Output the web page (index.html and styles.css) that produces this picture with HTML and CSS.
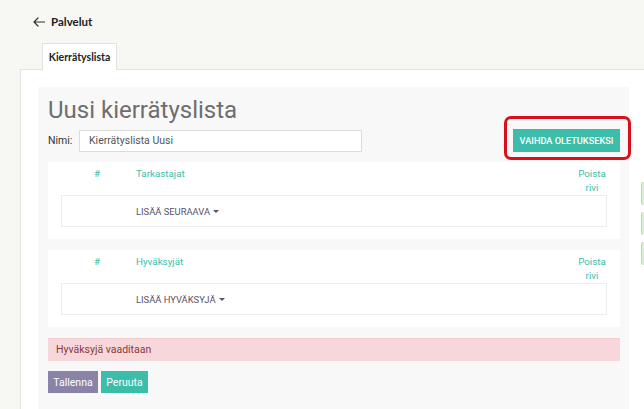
FILE: index.html
```html
<!DOCTYPE html>
<html lang="fi">
<head>
<meta charset="utf-8">
<title>Uusi kierrätyslista</title>
<link rel="stylesheet" href="styles.css">
</head>
<body>
<div class="topbar">
  <svg class="back" width="12" height="10" viewBox="0 0 12 10"><path d="M11.5 5H1M5 1 1 5l4 4" fill="none" stroke="#333" stroke-width="1.2" stroke-linecap="round" stroke-linejoin="round"/></svg>
  <span class="crumb">Palvelut</span>
</div>
<div class="tabs"><div class="tab">Kierrätyslista</div></div>
<div class="panel">
  <div class="content">
    <h1 class="title">Uusi kierrätyslista</h1>
    <div class="namerow">
      <label class="label">Nimi:</label>
      <div class="input">Kierrätyslista Uusi</div>
      <div class="btnwrap">
        <button class="btn teal defaultbtn">VAIHDA OLETUKSEKSI</button>
        <span class="highlight"></span>
      </div>
    </div>

    <div class="section">
      <div class="thead">
        <div class="c1">#</div>
        <div class="c2">Tarkastajat</div>
        <div class="c3">Poista rivi</div>
      </div>
      <div class="row"><span class="add">LISÄÄ SEURAAVA<span class="caret"></span></span></div>
    </div>

    <div class="section">
      <div class="thead">
        <div class="c1">#</div>
        <div class="c2">Hyväksyjät</div>
        <div class="c3">Poista rivi</div>
      </div>
      <div class="row"><span class="add">LISÄÄ HYVÄKSYJÄ<span class="caret"></span></span></div>
    </div>

    <div class="alert">Hyväksyjä vaaditaan</div>

    <div class="actions">
      <button class="btn purple">Tallenna</button>
      <button class="btn teal">Peruuta</button>
    </div>
  </div>
</div>
<div class="edge">
  <span class="edgebar"></span>
  <span class="edgebar"></span>
  <span class="edgebar"></span>
</div>
</body>
</html>
```
FILE: styles.css
```css
html, body {
  margin: 0;
  padding: 0;
}
body {
  background: #f7f7f3;
  font-family: Roboto, "Liberation Sans", sans-serif;
  height: 409px;
  overflow: hidden;
  position: relative;
}
.topbar {
  height: 43px;
  display: flex;
  align-items: center;
  padding-left: 33px;
  box-sizing: border-box;
}
.back {
  margin-right: 6px;
}
.crumb {
  font-family: Lato, "Open Sans", sans-serif;
  font-weight: 700;
  font-size: 11.5px;
  color: #222;
}
.tabs {
  padding-left: 42px;
  height: 26px;
  position: relative;
  z-index: 1;
}
.tab {
  display: inline-block;
  box-sizing: border-box;
  width: 75px;
  height: 27px;
  background: #fff;
  border: 1px solid #e2e2e0;
  border-bottom: none;
  font-family: Lato, "Open Sans", sans-serif;
  font-weight: 700;
  font-size: 10.5px;
  color: #222;
  text-align: center;
  line-height: 26px;
}
.panel {
  margin-left: 20px;
  background: #fff;
  border-top: 1px solid #e2e2e0;
  border-left: 1px solid #e2e2e0;
  padding: 17px 15px 0 17px;
  height: 340px;
  box-sizing: border-box;
  display: flex;
  flex-direction: column;
}
.content {
  flex: 1;
  min-height: 0;
  background: #f8f8f8;
  padding: 9px 9px 0 10px;
}
.title {
  margin: 0;
  font-size: 24px;
  line-height: 28px;
  font-weight: 400;
  color: #6e6e6e;
}
.namerow {
  display: flex;
  align-items: center;
  margin-top: 5px;
  height: 23px;
}
.label {
  font-size: 10.5px;
  color: #333;
  width: 31px;
}
.input {
  box-sizing: border-box;
  width: 283px;
  height: 22px;
  border: 1px solid #dcdcdc;
  background: #fff;
  font-size: 10.5px;
  color: #555;
  line-height: 20px;
  padding-left: 9px;
}
.btnwrap {
  margin-left: auto;
  position: relative;
}
.btn {
  border: none;
  font-family: Roboto, "Liberation Sans", sans-serif;
  font-size: 10.5px;
  color: #fff;
  height: 22px;
  padding: 0 5px;
  display: block;
}
.teal {
  background: #3bbda9;
}
.purple {
  background: #8b82a8;
}
.defaultbtn {
  width: 107px;
  height: 23px;
  padding: 0;
  font-size: 9.2px;
  font-weight: 500;
}
.highlight {
  position: absolute;
  left: -9px;
  top: -13px;
  right: -11px;
  bottom: -8px;
  border: 3px solid #d9101c;
  border-radius: 7px;
}
.section {
  background: #fff;
  margin-top: 10px;
  padding: 5px 13px 12px 13px;
}
.section + .section {
  margin-top: 11px;
}
.thead {
  display: grid;
  grid-template-columns: 72px 1fr 34px;
  font-size: 9.8px;
  line-height: 14px;
  color: #3bbda9;
}
.c1 {
  text-align: center;
}
.c2 {
  padding-left: 3px;
}
.c3 {
  text-align: center;
  transform: translateX(2px);
}
.row {
  box-sizing: border-box;
  height: 32px;
  border: 1px solid #ededed;
  display: flex;
  align-items: center;
  padding-left: 74px;
}
.add {
  font-size: 9.4px;
  color: #58526a;
  display: flex;
  align-items: center;
}
.caret {
  display: inline-block;
  margin-left: 3px;
  border-top: 3px solid #58526a;
  border-left: 3px solid transparent;
  border-right: 3px solid transparent;
}
.alert {
  margin-top: 11px;
  height: 23px;
  background: #f8d7da;
  border-top: 1px solid #f3cdd0;
  box-sizing: border-box;
  color: #87393f;
  font-size: 10.5px;
  line-height: 21px;
  padding-left: 8px;
}
.actions {
  display: flex;
  gap: 3px;
  margin-top: 10px;
}
.actions .purple {
  width: 50px;
}
.actions .teal {
  width: 47px;
}
.edge {
  position: absolute;
  left: 641px;
  top: 182px;
  display: flex;
  flex-direction: column;
  gap: 7px;
}
.edgebar {
  display: block;
  width: 6px;
  height: 23px;
  background: #d6efcd;
  border-left: 1px solid #b9e0ad;
  border-radius: 2px 0 0 2px;
}
```
